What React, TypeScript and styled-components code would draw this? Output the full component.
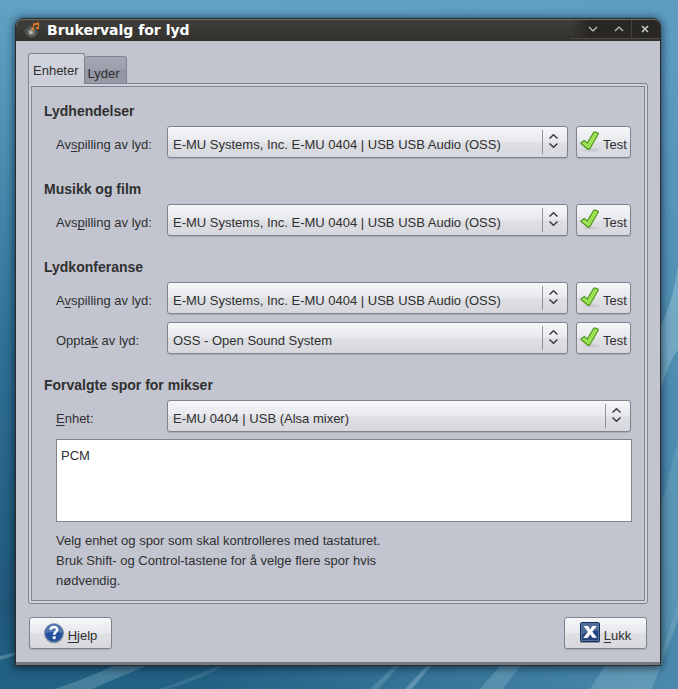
import React, { useState } from "react";
import styled, { createGlobalStyle } from "styled-components";

const GlobalStyle = createGlobalStyle`
  * { box-sizing: border-box; }
  body {
    margin: 0;
    color: #303030;
    font: 13px/20px "Liberation Sans", Arial, sans-serif;
  }
  button, select { font: inherit; color: inherit; }
`;

const EDGE = "#808290";
const FACE = "linear-gradient(#f6f7f9 0%, #e7e8ec 50%, #dfe0e4 52%, #d7d8dd 100%)";

const Desktop = styled.div`
  position: relative;
  min-height: 100vh;
  padding: 18px 17px 23px 15px;
  display: flex;
  background:
    linear-gradient(90deg, rgba(92, 156, 190, 0) 30%, rgba(92, 156, 190, 0.7) 100%),
    linear-gradient(#62a2c4 0%, #5598bb 12%, #2f7095 50%, #20587a 88%, #226283 100%);
`;

const Wallpaper = styled.svg`
  position: absolute;
  inset: 0;
  width: 100%;
  height: 100%;
`;

const Window = styled.main`
  position: relative;
  flex: 1;
  display: flex;
  flex-direction: column;
  border: 1px solid #2b2b2a;
  border-radius: 8px 8px 0 0;
  background: #c2c5cf;
  box-shadow: 0 1px 8px 1px rgba(0, 15, 30, 0.65);
`;

const TitleBar = styled.header`
  display: flex;
  align-items: center;
  height: 22px;
  padding-left: 8px;
  border-radius: 7px 7px 0 0;
  background: linear-gradient(#403f3a, #32312d);
  box-shadow: inset 0 1px #66706e;
`;

const Title = styled.h1`
  flex: 1;
  margin: 0 0 0 6px;
  color: #fff;
  font: bold 14px/20px "DejaVu Sans", sans-serif;
`;

const WindowControls = styled.div`
  display: flex;
  align-self: flex-start;
  height: 19px;
  margin-top: 1px;
  padding-left: 8px;
  border-bottom: 1px solid #4c4741;
  border-radius: 0 6px 0 0;
  background: linear-gradient(90deg, rgba(36, 35, 32, 0), #282724 20%);
`;

const ControlButton = styled.button<{ $divided?: boolean }>`
  display: grid;
  place-items: center;
  width: ${(p) => (p.$divided ? 29 : 26)}px;
  padding: ${(p) => (p.$divided ? "0 3px 1px 0" : "0 0 1px 2px")};
  border: 0;
  border-left: ${(p) => (p.$divided ? "1px solid #45433f" : "0")};
  background: none;
`;

const Content = styled.div`
  flex: 1;
  display: flex;
  flex-direction: column;
  padding: 12px 12px 13px;
  border-bottom: 3px solid #777985;
`;

const TabList = styled.div`
  display: flex;
  align-items: flex-end;
`;

const Tab = styled.button<{ $active: boolean }>`
  position: relative;
  z-index: ${(p) => (p.$active ? 1 : 0)};
  height: ${(p) => (p.$active ? 31 : 27)}px;
  margin-bottom: ${(p) => (p.$active ? -1 : 0)}px;
  padding: ${(p) => (p.$active ? "4px 5px 0 4px" : "7px 6px 0 3px")};
  border: 1px solid ${EDGE};
  border-bottom: 0;
  border-left-width: ${(p) => (p.$active ? 1 : 0)}px;
  border-radius: 3px 3px 0 0;
  background: ${(p) =>
    p.$active ? "linear-gradient(#d2d5dd, #cbced7)" : "linear-gradient(#a4a7b3 0%, #9c9fab 50%, #9093a0 52%, #979aa6 100%)"};
  line-height: 20px;
`;

const PanelFrame = styled.div`
  flex: 1;
  display: flex;
  padding: 2px;
  border: 1px solid ${EDGE};
  border-radius: 0 3px 3px 3px;
  background: #cfd2da;
`;

const Panel = styled.div`
  flex: 1;
  display: flex;
  flex-direction: column;
  gap: 21px;
  padding: 14px 13px 9px 12px;
  border: 1px solid ${EDGE};
  background: #c2c5cf;
`;

const Section = styled.section`
  display: flex;
  flex-direction: column;
  gap: 8px;
`;

const SectionTitle = styled.h2`
  margin: 0 0 -4px;
  font-size: 14px;
  line-height: 21px;
`;

const Row = styled.div`
  display: flex;
  padding-left: 12px;
`;

const Label = styled.label`
  width: 111px;
  padding-top: 9px;
`;

const Combo = styled.div`
  position: relative;
  flex: 1;
  min-width: 0;
`;

const Select = styled.select`
  display: block;
  width: 100%;
  height: 32px;
  padding: 5px 28px 0 5px;
  appearance: none;
  border: 1px solid ${EDGE};
  border-radius: 3px;
  background: ${FACE};
  box-shadow: 0 1px 1px rgba(128, 130, 144, 0.4);
`;

const ComboArrows = styled.span`
  position: absolute;
  top: 4px;
  right: 1px;
  bottom: 4px;
  width: 25px;
  display: grid;
  justify-content: center;
  padding: 3px 4px 0 0;
  border-left: 1px solid #9092a0;
  pointer-events: none;
`;

const PushButton = styled.button<{ $wide?: boolean }>`
  display: flex;
  justify-content: center;
  gap: 4px;
  width: ${(p) => (p.$wide ? 83 : 55)}px;
  height: 32px;
  padding: 4px 0 0;
  border: 1px solid ${EDGE};
  border-radius: 3px;
  background: ${FACE};
  box-shadow: 0 1px 1px rgba(128, 130, 144, 0.4);
`;

const ButtonText = styled.span`
  padding-top: 4px;
`;

const TestButton = styled(PushButton)`
  gap: 3px;
  margin-left: 8px;
`;

const TrackList = styled.select`
  height: 83px;
  margin: -1px -1px 0 12px;
  padding: 8px 0 0;
  overflow: hidden;
  border: 1px solid ${EDGE};
  border-radius: 0;
  background: #fff;
  outline: 0;

  option { padding: 0 4px; min-height: 20px; line-height: 20px; }
`;

const Hint = styled.p`
  width: 350px;
  max-width: 100%;
  margin: 0;
  padding: 1px 0 0 12px;
`;

const Actions = styled.footer`
  display: flex;
  justify-content: space-between;
  padding: 13px 1px 0;
`;

const Mnemonic = styled.u`
  text-underline-offset: 2px;
  text-decoration-skip-ink: none;
`;

function Marked({ text, at }: { text: string; at: number }) {
  return (
    <>
      {text.slice(0, at)}
      <Mnemonic>{text[at]}</Mnemonic>
      {text.slice(at + 1)}
    </>
  );
}

function SpeakerIcon() {
  return (
    <svg width="17" height="16" viewBox="0 0 17 16" aria-hidden="true">
      <path d="M1 8 6 4.500l4 1 3 4v2.500l-3 3H5.500l-4-4z" fill="#4a504f" stroke="#666c6a" strokeWidth=".7" />
      <circle cx="7.500" cy="10" r="3.600" fill="#757a77" />
      <circle cx="7" cy="10.500" r="1.800" fill="#b5b9b5" />
      <path d="M9.500 7V2l5-1v5M9.500 2.800l5-1" fill="none" stroke="#db7928" strokeWidth="1.200" />
      <ellipse cx="8.500" cy="7" rx="1.600" ry="1.200" fill="#db7928" />
      <ellipse cx="13.500" cy="6" rx="1.600" ry="1.200" fill="#db7928" />
    </svg>
  );
}

function CheckIcon() {
  return (
    <svg width="20" height="22" viewBox="0 0 20 22" aria-hidden="true">
      <ellipse cx="11" cy="19" rx="8" ry="1.800" fill="#000" opacity=".07" />
      <path d="M.8 12.200 4.300 9.500l3 2.600L13.800 1.200q2.800-.6 4.600 1.500L9.500 18.200H8z" fill="#8edc3c" stroke="#4f9320" strokeWidth="1.200" strokeLinejoin="round" />
      <path d="M2.800 12.200l1.500-1.100 3.400 3.100L14.600 2.500l2 .7L8.700 16.600z" fill="none" stroke="#b9ee7c" strokeWidth=".8" />
    </svg>
  );
}

function HelpIcon() {
  return (
    <svg width="20" height="22" viewBox="0 0 20 22" aria-hidden="true">
      <circle cx="10" cy="11.500" r="9.800" fill="#8d929c" />
      <circle cx="10" cy="11" r="9.300" fill="#25509a" stroke="#7f93b3" />
      <path d="M1.500 11a8.500 8.500 0 0 1 17 0Q10 9 1.500 11z" fill="#5378b0" />
      <path d="M6.600 7.800c.2-3.800 6.600-3.600 6.600-.3 0 2.400-3 2.600-3 5.200" fill="none" stroke="#fff" strokeWidth="2.400" />
      <rect x="8.800" y="14.300" width="2.800" height="2.800" fill="#fff" />
    </svg>
  );
}

function CloseIcon() {
  return (
    <svg width="20" height="22" viewBox="0 0 20 22" aria-hidden="true">
      <rect x="0" y="1" width="20" height="20" rx="1.500" fill="#8b8f99" />
      <rect x=".5" y=".5" width="19" height="19" rx="1.500" fill="#24457f" stroke="#15315f" />
      <path d="M1.500 1.500h17v7q-9 0-17 4z" fill="#506d9a" />
      <rect x="1.500" y="1.500" width="17" height="17" fill="none" stroke="#54719c" />
      <path d="M3.500 4H8l2.200 3.500L12.500 4h4.300l-4.500 5.800 4.700 6H12.500l-2.400-3.500L7.700 16H3.200l4.800-6.200z" fill="#fff" />
    </svg>
  );
}

const SYSTEM = "E-MU Systems, Inc. E-MU 0404 | USB USB Audio (OSS)";

interface DeviceField {
  id: string;
  label: string;
  mark: number;
  value: string;
  testable?: boolean;
}

function DeviceRow({ id, label, mark, value, testable = true }: DeviceField) {
  return (
    <Row>
      <Label htmlFor={id}>
        <Marked text={label} at={mark} />
      </Label>
      <Combo>
        <Select id={id} defaultValue={value}>
          <option>{value}</option>
        </Select>
        <ComboArrows>
          <svg width="11" height="18" viewBox="0 0 11 18" aria-hidden="true">
            <path d="M1.500 5.500 5.500 1.800l4 3.700M1.500 10.500l4 3.700 4-3.700" fill="none" stroke="#3a3a3c" strokeWidth="1.500" />
          </svg>
        </ComboArrows>
      </Combo>
      {testable && (
        <TestButton type="button">
          <CheckIcon />
          <ButtonText>Test</ButtonText>
        </TestButton>
      )}
    </Row>
  );
}

const SECTIONS: { title: string; fields: DeviceField[] }[] = [
  { title: "Lydhendelser", fields: [{ id: "events", label: "Avspilling av lyd:", mark: 2, value: SYSTEM }] },
  { title: "Musikk og film", fields: [{ id: "media", label: "Avspilling av lyd:", mark: 3, value: SYSTEM }] },
  {
    title: "Lydkonferanse",
    fields: [
      { id: "conference", label: "Avspilling av lyd:", mark: 1, value: SYSTEM },
      { id: "capture", label: "Opptak av lyd:", mark: 5, value: "OSS - Open Sound System" },
    ],
  },
];

export default function App() {
  const [tab, setTab] = useState("Enheter");
  return (
    <>
      <GlobalStyle />
      <Desktop>
        <Wallpaper viewBox="0 0 678 689" preserveAspectRatio="none" aria-hidden="true">
          <path d="M0 656 16 652V655L0 660z" fill="#9cc4d6" opacity=".35" />
          <path d="M55 689Q100 674 135 655H175Q130 672 92 689z" fill="#8ab8cc" opacity=".35" />
          <path d="M160 689Q200 675 225 662L230 663Q200 680 168 689z" fill="#8ab8cc" opacity=".2" />
          <path d="M370 689 400 660H405L378 689z" fill="#9cc4d6" opacity=".25" />
          <path d="M405 689 432 660H436L412 689z" fill="#9cc4d6" opacity=".4" />
          <path d="M480 689 505 660H525L503 689z" fill="#9cc4d6" opacity=".3" />
          <path d="M590 689 612 655H660L678 600V620L652 689z" fill="#9cc4d6" opacity=".3" />
          <path d="M655 335Q672 310 678 265V350Q668 360 655 410z" fill="#b4d6e6" opacity=".35" />
          <path d="M655 530 678 440V600L655 665z" fill="#9cc4d6" opacity=".2" />
        </Wallpaper>
        <Window>
          <TitleBar>
            <SpeakerIcon />
            <Title>Brukervalg for lyd</Title>
            <WindowControls>
              <ControlButton type="button" aria-label="Minimer">
                <svg width="10" height="8" viewBox="0 0 10 8"><path d="M1 2l4 4 4-4" fill="none" stroke="#c6c5bf" strokeWidth="1.200" /></svg>
              </ControlButton>
              <ControlButton type="button" aria-label="Maksimer">
                <svg width="10" height="8" viewBox="0 0 10 8"><path d="M1 6l4-4 4 4" fill="none" stroke="#c6c5bf" strokeWidth="1.200" /></svg>
              </ControlButton>
              <ControlButton type="button" aria-label="Lukk vindu" $divided>
                <svg width="8" height="8" viewBox="0 0 8 8"><path d="M1 1l6 6M7 1 1 7" stroke="#c6c5bf" strokeWidth="1.700" /></svg>
              </ControlButton>
            </WindowControls>
          </TitleBar>
          <Content>
            <TabList role="tablist">
              {["Enheter", "Lyder"].map((name) => (
                <Tab key={name} type="button" role="tab" aria-selected={tab === name} $active={tab === name} onClick={() => setTab(name)}>
                  {name}
                </Tab>
              ))}
            </TabList>
            <PanelFrame>
              <Panel role="tabpanel">
                {SECTIONS.map((section) => (
                  <Section key={section.title}>
                    <SectionTitle>{section.title}</SectionTitle>
                    {section.fields.map((field) => (
                      <DeviceRow key={field.id} {...field} />
                    ))}
                  </Section>
                ))}
                <Section>
                  <SectionTitle>Forvalgte spor for mikser</SectionTitle>
                  <DeviceRow id="mixer" label="Enhet:" mark={0} value="E-MU 0404 | USB (Alsa mixer)" testable={false} />
                  <TrackList multiple aria-label="Spor">
                    <option>PCM</option>
                  </TrackList>
                  <Hint>
                    Velg enhet og spor som skal kontrolleres med tastaturet. Bruk Shift- og Control-tastene for å velge
                    flere spor hvis nødvendig.
                  </Hint>
                </Section>
              </Panel>
            </PanelFrame>
            <Actions>
              <PushButton type="button" $wide>
                <HelpIcon />
                <ButtonText><Marked text="Hjelp" at={0} /></ButtonText>
              </PushButton>
              <PushButton type="button" $wide>
                <CloseIcon />
                <ButtonText><Marked text="Lukk" at={0} /></ButtonText>
              </PushButton>
            </Actions>
          </Content>
        </Window>
      </Desktop>
    </>
  );
}
